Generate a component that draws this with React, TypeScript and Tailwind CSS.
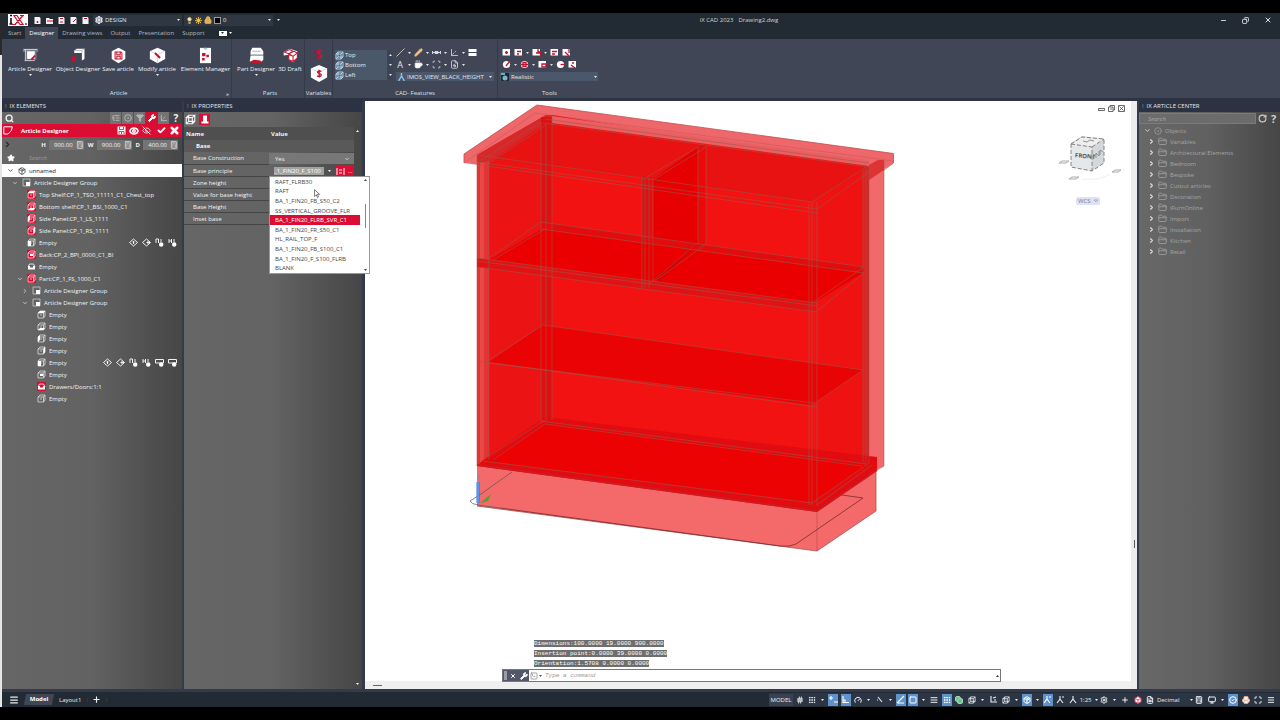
import type { ReactNode } from "react"
import clsx from "clsx"
import {
  Search, Filter, Wrench, Eye, EyeOff, Save, Check, X, Star, ChevronDown, ChevronRight, Settings,
  FolderClosed, RotateCw, Minus, Copy, Plus, Menu, Box, Grip, Lock, Sun, Lightbulb, Hash,
  ListTree, CircleDot, FileText, Printer, PenLine, Calculator, Package, SquareTerminal,
  AlignJustify, Maximize, Monitor, Axis3d, Slash, Pencil, Ruler, Coffee,
  FileSearch, Scan, Gauge, CircleCheck, Square,
} from "lucide-react"

type IconType = typeof Search

const Ico = ({ icon: I, size = 9, className, w = 2.5 }: { icon: IconType; size?: number; className?: string; w?: number }) => (
  <I size={size} strokeWidth={w} className={clsx("shrink-0", className)} aria-hidden />
)

const Caret = ({ className, sm }: { className?: string; sm?: boolean }) => (
  <svg viewBox="0 0 6 4" className={clsx("shrink-0", sm ? "h-[2px] w-[3px]" : "h-[3px] w-[5px]", className)} fill="currentColor">
    <path d="M0 0h6L3 4z" />
  </svg>
)

const WireCube = ({ className }: { className: string }) => (
  <svg viewBox="0 0 9 9" className={clsx("shrink-0", className)} stroke="currentColor" strokeWidth=".9" fill="none" aria-hidden>
    <path d="M1 3h5v5H1zM1 3l2-2h5L6 3M8 1v5L6 8M3 1v5h5M3 6L1 8" />
  </svg>
)

/* ---------- title bar ---------- */

const TitleBar = () => (
  <header className="flex h-[14px] items-center bg-[#222a33] pl-[6px] text-[#e2e4e8]">
    <svg viewBox="0 0 20 12" className="h-3 w-5 shrink-0">
      <rect width="20" height="12" fill="#fff" />
      <path d="M2 1.500h2M3 4v6M1.500 10h3" stroke="#111" strokeWidth="1.600" />
      <path d="M6 1.500h3l6 9h-3zM15 1.500l-8 9M4 10.500h4M12 1.500h4" fill="#fff" stroke="#c8102e" strokeWidth="1.200" />
      <path d="M17 10h2" stroke="#c8102e" strokeWidth="1.500" />
    </svg>
    <div className="ml-[5px] flex gap-[3px]">
      {["New", "Open", "Save", "Save as", "Plot"].map((name, i) => (
        <button key={name} aria-label={name} className="flex w-[9px] justify-center">
          <svg viewBox="0 0 9 9" className="h-[9px] w-[9px]">
            {i === 1 ? (
              <path d="M1 2h3l1 1h3v5H1z" fill="#f3eeee" />
            ) : (
              <path d="M1.500 1h5l1 1v6h-6z" fill="#f5f5f5" />
            )}
            <path
              d={["M3.500 6h2M4.500 5v2", "M2 5h6", "M3 2.500h3M3 6h3", "M4 6l3-3", "M3 2.500h3"][i]}
              stroke="#c8102e"
              strokeWidth="1"
            />
          </svg>
        </button>
      ))}
    </div>
    <button className="ml-[3px] flex h-[11px] w-[89px] items-center gap-[2px] bg-[#2f3743] px-[2px]">
      <Ico icon={Settings} size={8} w={4} />
      <span className="flex-1 text-left">DESIGN</span>
      <Caret sm />
    </button>
    <button className="ml-[2px] flex h-[11px] w-[89px] items-center gap-[2px] bg-[#2f3743] px-[2px]">
      <Ico icon={Lightbulb} size={7} className="fill-[#f7dfa0] text-[#f7dfa0]" />
      <Ico icon={Sun} size={7} w={4} className="fill-[#f2c14b] text-[#f2c14b]" />
      <Ico icon={Lock} size={8} className="fill-[#e6a94a] text-[#f0c27a]" />
      <span className="h-[7px] w-[7px] border border-[#999] bg-black" />
      <span className="flex-1 text-left">0</span>
      <Caret sm />
    </button>
    <Caret sm className="ml-[4px]" />
    <h1 className="flex flex-1 justify-center gap-[5px] pr-[22px] text-[#d0d3d8]">
      <span>iX CAD 2023</span>
      <span>Drawing2.dwg</span>
    </h1>
    <div className="flex gap-[15px] pr-[8px]">
      <button aria-label="Minimize"><Ico icon={Minus} size={7} w={3} /></button>
      <button aria-label="Restore"><Ico icon={Copy} size={7} w={3} className="-scale-x-100" /></button>
      <button aria-label="Close"><Ico icon={X} size={8} w={3} /></button>
    </div>
  </header>
)

const tabs = ["Start", "Designer", "Drawing views", "Output", "Presentation", "Support"]

const Tabs = () => (
  <nav className="flex h-3 bg-[#222a33] pl-[2px] text-[#b4bac3]">
    {tabs.map((tab) => (
      <a
        key={tab}
        href="#"
        className={clsx("flex items-center px-[4px]", tab === "Designer" && "bg-[#404656] text-white")}
      >
        {tab}
      </a>
    ))}
    <button aria-label="Ribbon options" className="ml-[10px] flex items-center gap-[2px] text-white">
      <span className="flex h-[5px] w-2 items-center justify-center bg-white text-[#333]"><Caret sm /></span>
      <Caret sm />
    </button>
  </nav>
)

/* ---------- ribbon ---------- */

const ribbonIcons: Record<string, ReactNode> = {
  "Article Designer": (
    <>
      <path d="M1 2h18v4h-2v9H4V6H1z" fill="#777b85" />
      <path d="M6 5h9v9H6z" fill="#fff" />
      <path d="M4 3v13M3 16h12M2 3h16" stroke="#ddd" />
      <path d="M10 14l5-5 1 2-4 5z" fill="#c8102e" />
    </>
  ),
  "Object Designer": (
    <>
      <path d="M5 4l3-2h9v12l-3 2V7H5z" fill="#fff" />
      <path d="M5 4h9v3M14 4l3-2" stroke="#a9adb5" fill="none" />
      <path d="M4 10l3 2v4l-3 2-2-2v-4z" fill="#c8102e" />
    </>
  ),
  "Save article": (
    <>
      <path d="M10 1l8 4v9l-8 5-8-5V5z" fill="#fff" />
      <path d="M6 6h7l1 1v7H6zM8 6v3h4V6M8 14v-3h4v3" stroke="#c8102e" strokeWidth="1.200" fill="none" />
    </>
  ),
  "Modify article": (
    <>
      <path d="M10 1l9 4v9l-9 5-9-5V5z" fill="#fff" />
      <path d="M2 5l8 4 8-4M10 9v10" stroke="#cdd0d5" fill="none" />
      <path d="M7 7l6 6" stroke="#c8102e" strokeWidth="2.400" />
    </>
  ),
  "Element Manager": (
    <>
      <rect x="3.500" y="1" width="13" height="18" fill="#fff" />
      <path d="M8 1h4v2H8z" fill="#b9bcc4" />
      <path d="M6 7h4v4H6zM6 13h3v3H6zM11 9h3v3h-3z" fill="#c8102e" />
    </>
  ),
  "Part Designer": (
    <>
      <path d="M5 1h10l3 4v4H3V5zM3 10h15v5l-2 2H2z" fill="#fff" />
      <path d="M4 9.500h13M5 5h10" stroke="#a9adb5" />
      <path d="M3 17l4-2 8 1v3H4z" fill="#c8102e" />
    </>
  ),
  "3D Draft": (
    <>
      <path d="M2 6l7-4 9 3v8l-5 5-5-3V9L2 10z" fill="#fff" />
      <path d="M3 6l6-3 4 2-5 3zM8 9l5 2v6l-5-2zM13 11l5-4v6l-5 4zM13 11L8 8l6-3 4 2" stroke="#c8102e" strokeWidth="1.200" fill="none" />
    </>
  ),
}

const RibbonButton = ({ name, className, caret }: { name: string; className: string; caret?: boolean }) => (
  <button className={clsx("flex flex-col items-center pt-[8px] text-[#f0f2f5]", className)}>
    <svg viewBox="0 0 20 20" className="h-[17px] w-[17px]">{ribbonIcons[name]}</svg>
    <span className="mt-[1px] h-2 leading-[8px] whitespace-nowrap">{name}</span>
    {caret && <Caret sm className="mt-[1px]" />}
  </button>
)

const RibbonGroup = ({ label, className, children, more }: { label: string; className: string; children: ReactNode; more?: boolean }) => (
  <section className={clsx("relative flex flex-col border-[#343a49]", className)}>
    <div className="flex flex-1">{children}</div>
    <h2 className="h-[10px] text-center leading-[10px] text-[#dfe2e7]">{label}</h2>
    {more && <span className="absolute right-[2px] bottom-0 leading-[8px] text-white">»</span>}
  </section>
)

const Tool = ({ icon, caret, color }: { icon: IconType; caret?: boolean; color?: string }) => (
  <button className="flex w-[18px] items-center gap-[3px] text-[#e4e7ec]">
    <Ico icon={icon} size={9} w={2} className={color} />
    {caret && <Caret sm />}
  </button>
)

const RedTool = ({ d, caret, round }: { d: string; caret?: boolean; round?: boolean }) => (
  <button className={clsx("flex items-center gap-[3px] text-[#d9dce2]", caret ? "w-[18px]" : "w-3")}>
    <svg viewBox="0 0 9 9" className="h-[9px] w-[9px]">
      {round ? <circle cx="4.500" cy="4.500" r="3.600" fill="#fff" /> : <rect x=".5" y="1" width="7.500" height="6.500" fill="#fff" />}
      <path d={d} stroke="#c8102e" strokeWidth="1.300" fill="none" />
    </svg>
    {caret && <Caret sm />}
  </button>
)

const Ribbon = () => (
  <div className="flex h-[62px] border-b-[3px] border-[#2d3342] bg-[#404656]">
    <RibbonGroup label="Article" className="w-[230px] border-r pl-1" more>
      <RibbonButton name="Article Designer" className="w-12" caret />
      <RibbonButton name="Object Designer" className="w-12" />
      <RibbonButton name="Save article" className="w-8" />
      <RibbonButton name="Modify article" className="w-[46px]" caret />
      <RibbonButton name="Element Manager" className="w-[51px]" />
    </RibbonGroup>
    <RibbonGroup label="Parts" className="w-[73px] border-r pl-1">
      <RibbonButton name="Part Designer" className="w-10" caret />
      <RibbonButton name="3D Draft" className="w-7" />
    </RibbonGroup>
    <RibbonGroup label="Variables" className="w-7 border-r">
      <div className="flex w-full flex-col items-center gap-[4px] pt-[9px]">
        <span className="text-[13px] leading-[12px] font-bold text-[#c01232]">$</span>
        <svg viewBox="0 0 20 20" className="h-[18px] w-[18px]">
          <path d="M10 1l9 4v10l-9 5-9-5V5z" fill="#fff" />
          <path d="M1 5l9 4 9-4" stroke="#cfd2d8" fill="none" />
          <path d="M12.500 8.500c-1-1.500-4.500-1-4 .8s4 1.200 4 3-3.500 2.200-4.500.6M10.200 6.500v8.500" stroke="#c8102e" strokeWidth="1.500" fill="none" />
        </svg>
      </div>
    </RibbonGroup>
    <RibbonGroup label="CAD- Features" className="w-[165px] border-r">
      <ul className="mt-[11px] ml-[2px] flex h-[30px] w-[52px] flex-col bg-[#4a5869] text-[#eceef1]">
        {["Top", "Bottom", "Left"].map((view) => (
          <li key={view} className="flex h-[10px] items-center gap-[1px]">
            <WireCube className="h-[9px] w-[9px] text-[#b9dcf5]" />
            {view}
          </li>
        ))}
      </ul>
      <div className="mt-[11px] flex h-[30px] w-[6px] flex-col items-center justify-around bg-[#3a4454] text-[#e3e6ea]">
        <Caret sm className="rotate-180" />
        <Caret sm />
        <Caret sm />
      </div>
      <div className="mt-[9px] ml-[3px] flex flex-col gap-[3px]">
        <div className="flex">
          <Tool icon={Slash} caret />
          <Tool icon={Pencil} caret color="fill-[#f0c27a] text-[#f0c27a]" />
          <button className="flex w-[18px] items-center gap-[3px] text-[#e4e7ec]">
            <svg viewBox="0 0 9 9" className="h-[9px] w-[9px]" stroke="currentColor" fill="none"><path d="M.5 3v3M8.500 3v3M.5 4.500h8M3 3.500h3v2H3z" strokeWidth=".9" /></svg>
            <Caret sm />
          </button>
          <Tool icon={Axis3d} caret />
          <svg viewBox="0 0 9 9" className="h-[9px] w-[9px]"><path d="M.5 1h8v3h-8zM.5 5h8v3h-8z" fill="#fff" /></svg>
        </div>
        <div className="flex">
          <button className="flex w-[18px] items-center gap-[4px] text-[#e3e6ea]">
            <span className="w-2 text-[9px] leading-[9px]">A</span>
            <Caret sm />
          </button>
          <Tool icon={Coffee} caret color="fill-white" />
          <Tool icon={Scan} caret />
          <Tool icon={FileSearch} caret />
        </div>
        <button className="flex h-[9px] w-[98px] items-center gap-[2px] bg-[#4b576a] px-[2px] text-[#e3e6ea]">
          <svg viewBox="0 0 7 8" className="h-2 w-[7px]"><path d="M3.500 0v3L.5 8M3.500 3l3 5" stroke="#8cc4ee" strokeWidth="1.400" fill="none" /></svg>
          <span className="flex-1 text-left">IMOS_VIEW_BLACK_HEIGHT</span>
          <Caret sm />
        </button>
      </div>
    </RibbonGroup>
    <RibbonGroup label="Tools" className="w-[103px]">
      <div className="mt-[9px] ml-[2px] flex flex-col gap-[3px]">
        <div className="flex pl-[2px]">
          <RedTool d="M3 4.500h3M4.500 3v3" />
          <RedTool d="M3 3.500h4M3 6h2" caret />
          <RedTool d="M6 1v3h3M4 5h5v4" caret />
          <RedTool d="M2 3.500h5M2 6h3" />
          <RedTool d="M7 1v4M3 4l4 4" />
        </div>
        <div className="flex pl-[2px]">
          <RedTool d="M4 6l4-5" round caret />
          <RedTool d="M1 4.500h7M3 2.500h3v4H3z" round caret />
          <RedTool d="M4 4h4v3H4z" caret />
          <RedTool d="M4.500 4.500h4" round />
          <RedTool d="M3 5l4 3M4 3h2" />
        </div>
        <button className="flex h-[9px] w-[98px] items-center gap-[2px] bg-[#4b576a] px-[1px] text-[#e3e6ea]">
          <svg viewBox="0 0 8 8" className="h-2 w-2">
            <rect width="8" height="8" fill="#1c2630" />
            <circle cx="4" cy="5" r="2.500" fill="#7fb3c8" />
            <path d="M0 0h4v2H0z" fill="#49c2a8" />
          </svg>
          <span className="flex-1 text-left">Realistic</span>
          <Caret sm />
        </button>
      </div>
    </RibbonGroup>
  </div>
)

/* ---------- element tree ---------- */

const PanelTitle = ({ children }: { children: ReactNode }) => (
  <h2 className="flex h-[11px] items-center gap-[3px] bg-[#2b3242] pb-[2px] pl-[3px] text-[#e6e8ec]">
    <span className="text-[#8d93a0]">⁞</span>
    {children}
  </h2>
)

const faces = {
  none: "",
  top: "M1 3l2-2h5L6.500 3z",
  bottom: "M3 6h5L6.500 8H1z",
  left: "M1 3l2-2v5L1 8z",
  right: "M6.500 3L8 1v5L6.500 8z",
  front: "M1 3h3v5H1z",
  mid: "M3 4h3v2H3z",
  drawer: "M1 4h2v1.500h3V4h2v3.500H1z",
  group: "M4 4h4v4H4z",
}

interface Node {
  level: number
  label: string
  face: keyof typeof faces
  red?: boolean
  arrow?: "open" | "closed"
  actions?: number
}

const nodes: Node[] = [
  { level: 0, label: "Article Designer Group", face: "group", arrow: "open" },
  { level: 1, label: "Top Shelf:CP_1_TSO_11111_C1_Chest_top", face: "top", red: true },
  { level: 1, label: "Bottom shelf:CP_1_BSI_1000_C1", face: "bottom", red: true },
  { level: 1, label: "Side Panel:CP_1_LS_1111", face: "left", red: true },
  { level: 1, label: "Side Panel:CP_1_RS_1111", face: "right", red: true },
  { level: 1, label: "Empty", face: "front", actions: 4 },
  { level: 1, label: "Back:CP_2_BPI_0000_C1_BI", face: "mid", red: true },
  { level: 1, label: "Empty", face: "drawer" },
  { level: 1, label: "Part:CP_1_FS_1000_C1", face: "none", red: true, arrow: "open" },
  { level: 2, label: "Article Designer Group", face: "group", arrow: "closed" },
  { level: 2, label: "Article Designer Group", face: "group", arrow: "open" },
  { level: 3, label: "Empty", face: "top" },
  { level: 3, label: "Empty", face: "bottom" },
  { level: 3, label: "Empty", face: "left" },
  { level: 3, label: "Empty", face: "right" },
  { level: 3, label: "Empty", face: "front", actions: 6 },
  { level: 3, label: "Empty", face: "mid" },
  { level: 3, label: "Drawers/Doors:1:1", face: "drawer", red: true },
  { level: 3, label: "Empty", face: "none" },
]

const indent = ["pl-[10px]", "pl-[15px]", "pl-[20px]", "pl-[25px]"]

const NodeIcon = ({ face, red }: { face: keyof typeof faces; red?: boolean }) => (
  <svg viewBox="0 0 9 9" className={clsx("h-[9px] w-[9px] shrink-0", red && "bg-[#d90d31]")}>
    {face === "group" ? (
      <path d="M1 1h7v7H1z" stroke="#ccc" strokeWidth=".8" fill="none" />
    ) : face === "drawer" ? (
      <path d="M1 5l1.500-3h4L8 5" stroke="#fff" strokeWidth=".8" fill="none" />
    ) : (
      <path d="M1 3h5.500v5H1zM1 3l2-2h5L6.500 3M8 1v5L6.500 8M3 5h2" stroke={red ? "#ffd5da" : "#ddd"} strokeWidth=".8" fill="none" />
    )}
    <path d={faces[face]} fill="#fff" />
  </svg>
)

const diamond = "M.5 4.500L4.500 1 8.500 4.500 4.500 8z"
const actionPaths = [
  { line: `${diamond}M4.500 3v3M3.500 4h2`, dot: false },
  { line: `${diamond}M4.500 4.500H8M6 3v3`, dot: false },
  { line: "M1 1v4M3.500 1v4M1 1h2.500M6 1v3", dot: true },
  { line: "M1 1v4M3.500 1v4M1 3h2.500M6 1v3", dot: true },
  { line: "M.5 1.500h8v3.500h-8z", dot: true },
  { line: "M.5 1.500h8v3.500h-8z", dot: true },
]

const ElementsPanel = () => (
  <aside className="flex w-[182px] shrink-0 flex-col border-r-2 border-[#343a4b] bg-linear-to-r from-[#666666] via-[#626262] to-[#464646] text-[#f4f4f4]">
    <PanelTitle>IX ELEMENTS</PanelTitle>
    <div className="flex h-[12px] items-center justify-between pl-[3px]">
      <button aria-label="Search elements"><Ico icon={Search} size={9} w={3.5} /></button>
      <div className="flex h-full gap-[1px]">
        {[ListTree, CircleDot, Filter, Wrench, Axis3d].map((icon, i) => (
          <button key={i} aria-label={`Tool ${i + 1}`} className={clsx("flex w-[11px] items-center justify-center", i === 3 ? "bg-[#d90d31] text-white" : "bg-[#737373] text-[#b5b5b5]")}>
            <Ico icon={icon} size={8} w={3} className={clsx(i === 3 && "fill-white", i === 2 && "fill-[#b5b5b5]")} />
          </button>
        ))}
        <button className="w-3 text-[10px] leading-[12px] font-bold">?</button>
      </div>
    </div>
    <div className="flex h-[13px] items-center gap-[3px] bg-[#dc0c32] pr-[2px] pl-[1px] text-white">
      <svg viewBox="0 0 10 9" className="h-[9px] w-[10px]"><path d="M.8.8h8.500l-1 4L5 8H.8z" stroke="#fff" fill="none" /></svg>
      <h3 className="ml-[5px] flex-1 font-bold">Article Designer</h3>
      <button aria-label="Save">
        <svg viewBox="0 0 9 9" className="h-[9px] w-[9px]">
          <path d="M.5.5h8v8h-8z" fill="#fff" />
          <path d="M2.500 1v2.500h4V1M2 8V5.500h5V8M4.500 6v2" stroke="#dc0c32" strokeWidth=".8" fill="none" />
        </svg>
      </button>
      <button aria-label="Show"><Ico icon={Eye} size={10} w={3.500} /></button>
      <button aria-label="Hide"><Ico icon={EyeOff} size={9} w={2} /></button>
      <button aria-label="Apply" className="ml-[3px]"><Ico icon={Check} size={9} w={5} /></button>
      <button aria-label="Cancel"><Ico icon={X} size={11} w={5.500} /></button>
    </div>
    <div className="flex h-[15px] items-center pl-[1px]">
      <Ico icon={ChevronRight} size={9} w={3} className="text-[#1d2e20]" />
      <div className="flex flex-1 justify-end gap-[4px] pr-[4px]">
        {[["H", "900.00"], ["W", "900.00"], ["D", "400.00"]].map(([axis, value]) => (
          <label key={axis} className="flex items-center gap-[3px] font-bold">
            {axis}
            <span className="flex h-[10px] items-center bg-[#747474]">
              <input defaultValue={value} className="w-[27px] pr-[3px] text-right font-normal outline-none" />
              <Ico icon={Calculator} size={8} w={2} />
            </span>
          </label>
        ))}
      </div>
    </div>
    <div className="flex h-[12px] items-center pl-[5px]">
      <Ico icon={Star} size={8} className="fill-white text-white" />
      <input aria-label="Search tree" placeholder="Search" className="ml-[14px] flex-1 italic outline-none placeholder:text-[#9b9b9b]" />
    </div>
    <div className="flex h-[13px] items-center bg-white pl-[5px] text-[#222]">
      <Ico icon={ChevronDown} size={7} />
      <Ico icon={Package} size={8} w={2} className="ml-[4px]" />
      <span className="ml-[3px]">unnamed</span>
    </div>
    <ul>
      {nodes.map((node, i) => (
        <li key={i} className={clsx("flex h-3 items-center pr-[5px] pb-[1px]", indent[node.level])}>
          <span className="w-[10px]">
            {node.arrow && <Ico icon={node.arrow === "open" ? ChevronDown : ChevronRight} size={6} />}
          </span>
          <NodeIcon face={node.face} red={node.red} />
          <span className="ml-[3px] flex-1 whitespace-nowrap">{node.label}</span>
          {node.actions && (
            <span className="flex gap-[4px]">
              {actionPaths.slice(0, node.actions).map(({ line, dot }, j) => (
                <svg key={j} viewBox="0 0 9 9" className="h-[9px] w-[9px]">
                  <path d={line} stroke="#f1f1f1" fill="none" />
                  {dot && <circle cx="6.200" cy="6.500" r="2.200" fill="#fff" />}
                </svg>
              ))}
            </span>
          )}
        </li>
      ))}
    </ul>
  </aside>
)

/* ---------- properties ---------- */

const principles = [
  "RAFT_FLRB30", "RAFT", "BA_1_FIN20_FB_S50_C2", "SS_VERTICAL_GROOVE_FLR", "BA_1_FIN20_FLRB_SVR_C1",
  "BA_1_FIN20_FR_S50_C1", "HL_RAIL_TOP_F", "BA_1_FIN20_FB_S100_C1", "BA_1_FIN20_F_S100_FLRB", "BLANK",
]

const PrincipleList = () => (
  <div className="absolute top-[11px] left-0 z-10 w-[101px] border border-[#999] bg-white text-[#444]">
    <ul role="listbox" className="grid h-[96px] auto-rows-fr overflow-hidden pr-[9px]">
      {principles.map((name, i) => (
        <li
          key={name}
          role="option"
          aria-selected={i === 4}
          className={clsx("flex items-center pl-[5px] whitespace-nowrap", i === 4 && "bg-[#dc0c32] text-white")}
        >
          {name}
        </li>
      ))}
    </ul>
    <span className="absolute top-[27px] right-[3px] h-6 w-[1px] bg-[#888]" />
    <Caret sm className="absolute top-[2px] right-[2px] rotate-180" />
    <Caret sm className="absolute right-[2px] bottom-[2px]" />
    <svg viewBox="0 0 7 10" className="absolute top-[12px] left-[44px] h-[9px] w-[6px]">
      <path d="M.5.5v8l2-2 1.500 3 1.200-.6L4 6h2.500z" fill="#fff" stroke="#222" strokeWidth=".7" />
    </svg>
  </div>
)

const nameCell = "border-b border-[#454545] p-0 pl-[9px] text-left font-normal"

const PropertiesPanel = () => (
  <aside className="flex w-[181px] shrink-0 flex-col border-r-[3px] border-[#343a4b] bg-linear-to-r from-[#666666] via-[#636363] to-[#464646] text-[#f4f4f4]">
    <PanelTitle>IX PROPERTIES</PanelTitle>
    <div className="flex h-[15px] items-center gap-[3px] pl-[1px]">
      <button aria-label="Article view"><WireCube className="h-[11px] w-[11px]" /></button>
      <button aria-label="Base view" className="flex h-[11px] w-[11px] justify-center bg-[#dc0c32]">
        <svg viewBox="0 0 10 10" className="h-[11px] w-[10px]"><path d="M3 1h4v6h1.500v2h-7V7H3z" fill="#fff" /></svg>
      </button>
    </div>
    <div className="relative">
      <table className="w-[170px] table-fixed border-separate border-spacing-0">
        <thead>
          <tr className="h-[13px] bg-[#4f4f4f]">
            <th className="w-[85px] p-0 pl-[2px] text-left">Name</th>
            <th className="p-0 pl-[2px] text-left">Value</th>
          </tr>
        </thead>
        <tbody>
          <tr className="h-[12px] bg-[#595959]">
            <th colSpan={2} className="p-0 pl-[5px] text-left">
              <span className="inline-block w-[7px] text-[#a02435]">-</span>Base
            </th>
          </tr>
          <tr className="h-[13px]">
            <th className={nameCell}><label htmlFor="construction">Base Construction</label></th>
            <td className="p-0">
              <div className="flex h-[11px] items-center bg-[#777] pr-[4px]">
                <select id="construction" className="flex-1 appearance-none pl-[6px] outline-none"><option>Yes</option></select>
                <Ico icon={ChevronDown} size={6} />
              </div>
            </td>
          </tr>
          <tr className="h-[12px]">
            <th className={nameCell}><label htmlFor="principle">Base principle</label></th>
            <td className="relative p-0">
              <div className="flex h-[12px] items-center">
                <input id="principle" defaultValue="_1_FIN20_F_S100" className="ml-[5px] h-[8px] w-[50px] bg-[#a2a2a2] text-white outline-none" />
                <Caret sm className="mx-[4px]" />
                <div className="flex h-full flex-1 items-center justify-around bg-[#dc0c32]">
                  <svg viewBox="0 0 9 9" className="h-[9px] w-[9px]"><path d="M1 1v7M8 1v7M3 3h3M3 6h3" stroke="#fff" /></svg>
                  <span className="leading-[6px]">...</span>
                </div>
              </div>
              <PrincipleList />
            </td>
          </tr>
          {["Zone height", "Value for base height", "Base Height", "Inset base"].map((name) => (
            <tr key={name} className="h-[12px]">
              <th className={nameCell}>{name}</th>
              <td className="p-0" />
            </tr>
          ))}
        </tbody>
      </table>
      <Caret sm className="absolute top-[3px] right-[3px] rotate-180" />
    </div>
    <Caret sm className="mt-auto mr-[3px] mb-[4px] self-end" />
  </aside>
)

/* ---------- drawing ---------- */

const Cabinet = () => (
  <svg viewBox="365 101 766 580" className="h-full w-full" fill="none">
    {/* plinth */}
    <path d="M477 466L817 511L876 471V511L817 551L477 506z" fill="#f46a6b" />
    <path d="M817 511V551" stroke="#d85457" />
    <path d="M477 506L817 551L876 511V471" stroke="#a84f52" strokeWidth=".8" />
    <path d="M512 472L478 496L470 501Q471 504 478 505L500 508" stroke="#555" strokeWidth=".7" />
    <path d="M500 508L780 546Q790 547 796 544L863 498L835 494" stroke="#7a2a2d" strokeWidth=".8" />
    {/* top board */}
    <path d="M464 154L537 105L893.500 153.500V163L818 212L464 163z" fill="#ee686b" />
    <path d="M464 163V154L537 105L893.500 153.500V163L884 170" stroke="#c24d50" strokeWidth=".8" />
    <path d="M464 163L535 113L893 161" stroke="#cf5558" strokeWidth=".6" />
    {/* carcass */}
    <path d="M869 163L884 160V466L869 474z" fill="#f2696b" />
    <path d="M477 155L546 115H552L869 165V468L817 512L477 466z" fill="#f21212" />
    <path d="M863 168L878 160H884V170L863 184z" fill="#dc3335" />
    <path d="M477 157H489V466H477z" fill="#e33435" />
    <path d="M480 157H484V466H480z" fill="#ea4747" />
    <path d="M489 160L541 125V430L489 466z" fill="#eb1313" />
    <path d="M818 200L864 170V462L818 506z" fill="#ee1213" />
    <path d="M863 168H869V470H863z" fill="#db2224" />
    {/* top inner face */}
    <path d="M552 116L869 160V166L552 123z" fill="#ea5f62" />
    <path d="M546 123L869 167L812 202L488 158z" fill="#e91213" />
    <path d="M477 155L546 115H552V119L490 161L477 163z" fill="#d92629" />
    <path d="M541 117H552V422H541z" fill="#dc1112" />
    {/* middle divider */}
    <path d="M653 179L698 147V243L653 281z" fill="#e60001" />
    <path d="M642 177H652V288H642z" fill="#dc1011" />
    <path d="M698 146H706V244H698z" fill="#ea0a0a" />
    {/* upper shelf */}
    <path d="M542 229L863 273L812 304L489 260z" fill="#ea0001" />
    <path d="M541 222L864 267V273L541 229z" fill="#e00c0d" />
    <path d="M477 258L816 303V312L477 267z" fill="#e01214" />
    <path d="M653 279L698 243V244L660 281z" fill="#d80002" />
    {/* lower shelf */}
    <path d="M543 325L863 370L812 405L489 362z" fill="#ea0304" />
    {/* bottom board */}
    <path d="M483 460L545 417L877 457V470L817 511L477 466z" fill="#e20b0f" />
    <path d="M488 461L545 424L866 465L812 502z" fill="#ec0203" />
    <path d="M477 465L817 511L877 470" stroke="#cf1a22" strokeWidth="2" />
    {/* edges */}
    <g stroke="#9a5a4c" strokeOpacity=".7" strokeWidth=".8">
      <path d="M543 123L869 167M545 119L869 163M477 155L812 202M477 162L817 209M480 165L817 213" />
      <path d="M477 155V466M489 160V460M541 122V422M546 124V420M552 116V420" />
      <path d="M477 163L541 122M489 163L546 125M812 202L866 167M817 209L869 172" />
      <path d="M642 177V288M645 180V288M649 177V288M653 182V282M698 147V243M706 146V244" />
      <path d="M642 180L698 147M653 180L706 147M649 284L698 243M655 281L706 244" />
      <path d="M541 222L864 267M541 229L864 273M477 258L817 303M477 261L817 306M477 267L817 312" />
      <path d="M489 258L541 222M493 260L545 229M812 303L864 267M817 311L864 273" />
      <path d="M489 360L543 325L863 370L812 405M477 361L817 407M489 363L814 403" />
      <path d="M541 421L866 464M545 424L862 466M483 460L545 420M493 460L545 424M483 461L812 503M812 503L869 463M817 505L872 465" />
      <path d="M809 202V505M812 202V505M817 202V506M863 170V463M866 168V463M869 168V463M884 161V466L877 470" />
    </g>
    {/* ucs marker */}
    <path d="M478 482V503" stroke="#2e6fe0" strokeWidth="3" />
    <path d="M478 482V503" stroke="#a9c8ff" strokeWidth=".8" />
    <path d="M477 475h3l-3 4h3" stroke="#8b7fb0" strokeWidth=".7" />
    <path d="M480 503L491 494L488 501z" fill="#5d9c2c" />
    {/* view cube */}
    <path d="M1071 143L1082 136L1104 139V163L1092 171L1071 167z" fill="#d5d8db" />
    <path d="M1071 144L1092 147V171L1071 167z" fill="#e6e7e9" />
    <path d="M1071 144L1082 137L1104 139L1092 147z" fill="#eeeeef" />
    <path d="M1071 144L1082 137L1104 139V163L1092 171L1071 167zL1092 147V171M1092 147L1104 139" stroke="#777" strokeWidth=".9" strokeDasharray="4 2" />
    <text x="1075" y="158" transform="rotate(5 1083 156)" className="text-[6px] font-bold" fill="#555">FRONT</text>
    <path d="M1096 158v-5l3 3v-5M1100 155v-5l3 2M1083 141l4 1 3-2 4 1" stroke="#888" strokeWidth=".9" />
    <path d="M1059 163l3-2h7l-3 2zM1069 179l3-2h7l-3 2zM1112 172l3-2h6l-3 2z" stroke="#aaaaae" />
    <path d="M1110 174q-10 7-28 5" stroke="#efeff1" />
    <rect x="1076" y="197" width="24" height="8" rx="2" fill="#e0e1f2" />
    <text x="1078" y="203" className="text-[6px]" fill="#7d7f9a">WCS</text>
    <path d="M1094 200h4l-2 2z" stroke="#9a9cb5" strokeWidth=".7" />
  </svg>
)

const log = [
  "Dimensions:100.0000 19.0000 900.0000",
  "Insertion point:0.0000 39.0000 0.0000",
  "Orientation:1.5708 0.0000 0.0000",
]

const Canvas = () => (
  <main className="relative flex min-w-0 flex-1 bg-white">
    <div className="flex min-w-0 flex-1 flex-col">
      <div className="min-h-0 flex-1"><Cabinet /></div>
      <div className="flex h-2 shrink-0 items-center bg-[#efefef] pl-2"><span className="h-px w-[9px] bg-[#666]" /></div>
    </div>
    <div className="flex w-[6px] flex-col items-center bg-[#ececec]">
      <span className="mt-[439px] h-2 w-px bg-[#555]" />
    </div>
    <div className="absolute top-[4px] right-[12px] flex gap-[3px] text-[#444]">
      <svg viewBox="0 0 7 7" className="h-[7px] w-[7px]"><path d="M.5 3.500h6v2h-6z" stroke="currentColor" fill="none" strokeWidth=".8" /></svg>
      <svg viewBox="0 0 7 7" className="h-[7px] w-[7px]"><path d="M.5 2h4.500v4.500H.5zM2 2V.5h4.500V5H5M2 4h2" stroke="currentColor" fill="none" strokeWidth=".8" /></svg>
      <svg viewBox="0 0 7 7" className="h-[7px] w-[7px]"><path d="M.5.5h6v6h-6zM1.500 1.500l4 4M5.500 1.500l-4 4" stroke="currentColor" fill="none" strokeWidth=".8" /></svg>
    </div>
    <div className="absolute bottom-[7px] left-[137px] w-[499px] font-['Liberation_Mono',monospace]">
      <div className="flex flex-col items-start gap-[3px] pb-[2px] pl-8">
        {log.map((line) => (
          <p key={line} className="h-[7px] bg-[#6e6e6e] leading-[7px] text-white">{line}</p>
        ))}
      </div>
      <div className="flex h-[13px] items-center border border-[#777] bg-white">
        <div className="flex h-full items-center gap-[3px] bg-[#52566a] px-[1px] text-white">
          <span className="h-[9px] w-[3px] bg-[#9a9ca8]" />
          <button aria-label="Close command line"><Ico icon={X} size={6} w={4} /></button>
          <button aria-label="Customize" className="ml-[1px]"><Ico icon={Wrench} size={8} className="fill-white" /></button>
        </div>
        <Ico icon={SquareTerminal} size={8} w={2} className="ml-[1px] text-[#777]" />
        <Caret sm className="ml-px text-[#555]" />
        <input aria-label="Command" placeholder="Type a command" className="ml-[3px] flex-1 italic outline-none placeholder:text-[#999]" />
        <Caret sm className="mr-[1px] rotate-180 text-[#333]" />
      </div>
    </div>
  </main>
)

/* ---------- article center ---------- */

const folders = [
  "Variables", "Architectural Elements", "Bedroom", "Bespoke", "Cutout articles", "Decoration",
  "iFurnOnline", "Import", "Installation", "Kitchen", "Retail",
]

const ArticleCenter = () => (
  <aside className="flex w-[143px] shrink-0 flex-col border-l-2 border-[#343a4b] bg-linear-to-r from-[#686868] via-[#606060] to-[#464646] text-[#a5a5a5]">
    <PanelTitle>IX ARTICLE CENTER</PanelTitle>
    <div className="flex h-[13px] items-center gap-[2px] pr-[2px] text-[#d0d0d0]">
      <input aria-label="Search articles" placeholder="Search" className="h-[11px] min-w-0 flex-1 border border-[#7b7b7b] bg-[#6b6b6b] pl-[8px] italic outline-none placeholder:text-[#aaa]" />
      <button aria-label="Refresh"><Ico icon={RotateCw} size={9} w={3} /></button>
      <button className="w-[9px] text-[11px] leading-[11px] font-bold">?</button>
    </div>
    <ul>
      <li className="flex h-[11px] items-center gap-[3px] pl-[5px]">
        <Ico icon={ChevronDown} size={7} w={3} className="text-[#ddd]" />
        <Ico icon={CircleDot} size={8} w={2} />
        Objects
      </li>
      {folders.map((name) => (
        <li key={name} className="flex h-[11px] items-center gap-[3px] pl-[9px]">
          <Ico icon={ChevronRight} size={7} w={4} className="text-[#ddd]" />
          <Ico icon={FolderClosed} size={9} w={2} />
          {name}
        </li>
      ))}
    </ul>
  </aside>
)

/* ---------- status bar ---------- */

const cell = "flex h-[12px] w-3 items-center justify-center"

const Stat = ({ icon, on, caret, color }: { icon?: IconType; on?: boolean; caret?: boolean; color?: string }) => (
  <>
    <button className={clsx(cell, on && "border-x border-[#2c3544] bg-[#5f93cc] text-white")}>
      {icon ? <Ico icon={icon} size={8} w={3} className={color} /> : <WireCube className="h-2 w-2" />}
    </button>
    {caret && <span className="flex w-2 justify-center"><Caret sm /></span>}
  </>
)

const Drawn = ({ d, on, caret }: { d: string; on?: boolean; caret?: boolean }) => (
  <>
    <button className={clsx(cell, on && "border-x border-[#2c3544] bg-[#5f93cc] text-white")}>
      <svg viewBox="0 0 9 9" className="h-[9px] w-[9px]" stroke="currentColor" strokeWidth="1.100" fill="none"><path d={d} /></svg>
    </button>
    {caret && <span className="flex w-2 justify-center"><Caret sm /></span>}
  </>
)

const StatusBar = () => (
  <footer className="flex h-[15px] items-center bg-[#222a33] text-[#eceef0]">
    <button aria-label="Menu" className="ml-[7px]"><Ico icon={Menu} size={10} w={3} /></button>
    <button className="ml-[6px] h-[11px] w-7 -skew-x-12 bg-[#404656] leading-[11px]"><span className="block skew-x-12 font-bold text-white">Model</span></button>
    <button className="ml-[6px]">Layout1</button>
    <span className="ml-[5px] text-[#4a5261]">/</span>
    <button aria-label="New layout" className="ml-[3px]"><Ico icon={Plus} size={9} w={3} /></button>
    <span className="ml-[5px] text-[#4a5261]">/</span>
    <div className="ml-auto flex h-[13px] w-[511px] items-center justify-between bg-[#2c3544] pr-[3px]">
      <button className="h-[12px] w-6 bg-[#3a4252]">MODEL</button>
      <Stat icon={Hash} />
      <Stat icon={Grip} caret />
      <Drawn d="M2 1v4M0 3h4M5 7h4" on />
      <Drawn d="M2 1v6.500h6M2 5h2v2" on />
      <Stat icon={Gauge} caret />
      <Drawn d="M3 2l4 5M2 5h1" caret />
      <Drawn d="M1 8L8 1M1 8h7" on />
      <Stat icon={Square} on caret />
      <Stat icon={AlignJustify} />
      <Stat icon={Grip} on />
      <Stat icon={Copy} color="fill-[#5fc58a] text-[#bfe8cf]" />
      <Stat caret />
      <Drawn d="M2 1v6h6M4 3l3-1M5 5h2" />
      <Stat caret />
      <Stat icon={Package} on caret />
      <Drawn d="M4 1v3L1 8M4 4l3 4M6 2h2" on />
      <Drawn d="M4 1v3L1 8M4 4l3 4M6 2h2" />
      <Drawn d="M4 1v3L1 8M4 4l3 4" />
      <button className="flex items-center gap-[3px]">1:25<Caret sm /></button>
      <Stat icon={Settings} caret />
      <Stat icon={Plus} />
      <Stat icon={Box} color="fill-white text-[#e55368]" />
      <Stat icon={FileText} />
      <button className="flex w-9 items-center justify-between">Decimal<Caret sm /></button>
      <Stat icon={Calculator} />
      <Stat icon={Monitor} caret />
      <Stat icon={CircleCheck} on />
      <Stat icon={Printer} color="fill-white text-[#f0b0a0]" />
      <Stat icon={Maximize} />
      <Stat icon={Menu} />
    </div>
  </footer>
)

export default function App() {
  return (
    <div className="h-screen bg-black py-[13px] font-['Open_Sans','Noto_Sans',sans-serif] text-[6px] leading-[8px]">
      <div className="flex h-full flex-col bg-linear-to-b from-[#2a2a2a] from-6% to-[#e6e6e6] to-6% pl-[2px]">
        <TitleBar />
        <Tabs />
        <Ribbon />
        <div className="flex min-h-0 flex-1 border-b-[3px] border-[#343a4b]">
          <ElementsPanel />
          <PropertiesPanel />
          <Canvas />
          <ArticleCenter />
        </div>
        <StatusBar />
      </div>
    </div>
  )
}
